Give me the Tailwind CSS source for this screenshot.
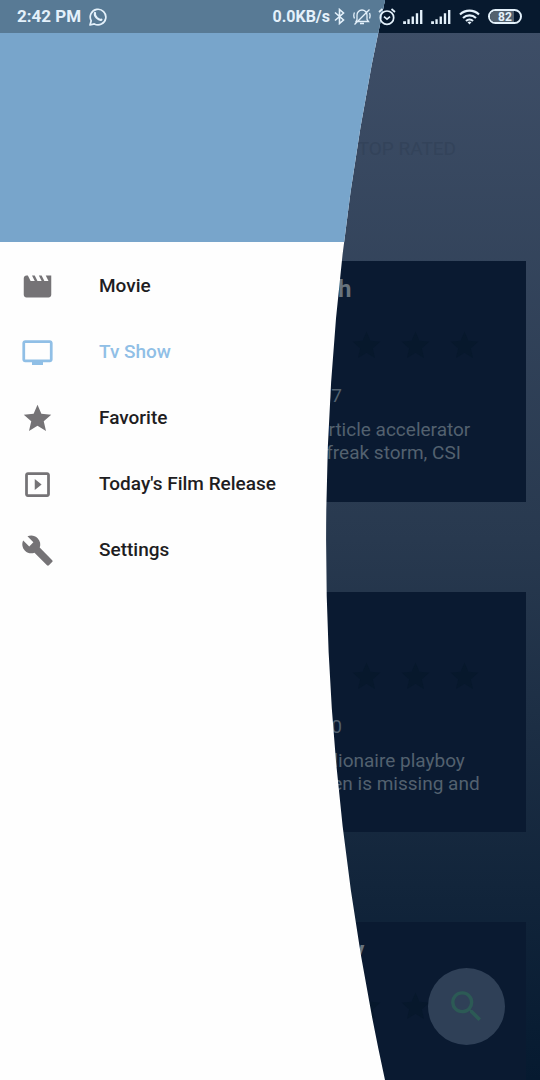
<!DOCTYPE html>
<html lang="en">
<head>
<meta charset="utf-8">
<meta name="viewport" content="width=device-width, initial-scale=1">
<title>TV Shows</title>
<script src="https://cdn.jsdelivr.net/npm/@tailwindcss/browser@4"></script>
</head>
<body class="font-[Roboto,sans-serif]">
<svg class="absolute size-0" aria-hidden="true">
  <defs>
    <clipPath id="drawer-curve" clipPathUnits="objectBoundingBox"><path d="M0 0H1Q.694 .5 1 1H0Z"/></clipPath>
    <symbol id="star" viewBox="0 0 24 24"><path d="M12 17.27 18.18 21l-1.64-7.03L22 9.24l-7.19-.61L12 2 9.19 8.63 2 9.24l5.46 4.73L5.82 21z"/></symbol>
    <symbol id="signal" viewBox="0 0 21 16"><path d="M0 13h3v3H0zM4.500 11h2.500v5H4.500zM9 8h2.500v8H9zM13.500 4.500H16V16h-2.500zM18 1h2.500v15H18z"/></symbol>
  </defs>
</svg>

<div class="relative min-h-screen overflow-hidden bg-linear-to-b from-[#3f4f68] via-[#28394f] to-[#061a30]">

  <main class="h-screen overflow-hidden">
    <div class="h-[33px] bg-[#07192e]"></div>
    <nav class="flex h-[228px] items-start justify-end pt-[104px] pr-[84px]">
      <a href="#" class="text-[19px] leading-6 text-[#33435a]">TOP RATED</a>
    </nav>
    <div class="flex flex-col gap-[90px] pr-3.5">
      <article class="h-[241px] shrink-0 bg-[#0a1a31] pt-3 pl-[246px]">
        <h2 class="text-2xl leading-8 font-bold text-[#68737d]">The Flash</h2>
        <div class="mt-6 flex gap-4 pl-1.5 text-[#07182c]">
          <svg class="size-[33px]" fill="currentColor"><use href="#star"/></svg>
          <svg class="size-[33px]" fill="currentColor"><use href="#star"/></svg>
          <svg class="size-[33px]" fill="currentColor"><use href="#star"/></svg>
          <svg class="size-[33px]" fill="currentColor"><use href="#star"/></svg>
          <svg class="size-[33px]" fill="currentColor"><use href="#star"/></svg>
        </div>
        <p class="mt-[22px] text-[19px] leading-6 text-[#53616f]">2014-10-07</p>
        <p class="mt-2.5 text-[19px] leading-[23px] whitespace-nowrap text-[#53616f]">After a particle accelerator<br>causes a freak storm, CSI</p>
      </article>
      <article class="h-[240px] shrink-0 bg-[#0a1a31] pt-3 pl-[246px]">
        <h2 class="text-2xl leading-8 font-bold text-[#68737d]">Arrow</h2>
        <div class="mt-6 flex gap-4 pl-1.5 text-[#07182c]">
          <svg class="size-[33px]" fill="currentColor"><use href="#star"/></svg>
          <svg class="size-[33px]" fill="currentColor"><use href="#star"/></svg>
          <svg class="size-[33px]" fill="currentColor"><use href="#star"/></svg>
          <svg class="size-[33px]" fill="currentColor"><use href="#star"/></svg>
          <svg class="size-[33px]" fill="currentColor"><use href="#star"/></svg>
        </div>
        <p class="mt-[22px] text-[19px] leading-6 text-[#53616f]">2012-10-10</p>
        <p class="mt-2.5 text-[19px] leading-[23px] whitespace-nowrap text-[#53616f]">Spoiled billionaire playboy<br>Oliver Queen is missing and</p>
      </article>
      <article class="h-[240px] shrink-0 bg-[#0a1a31] pt-3 pl-[246px]">
        <h2 class="text-2xl leading-8 font-bold text-[#68737d]">The Family</h2>
        <div class="mt-6 flex gap-4 pl-1.5 text-[#07182c]">
          <svg class="size-[33px]" fill="currentColor"><use href="#star"/></svg>
          <svg class="size-[33px]" fill="currentColor"><use href="#star"/></svg>
          <svg class="size-[33px]" fill="currentColor"><use href="#star"/></svg>
          <svg class="size-[33px]" fill="currentColor"><use href="#star"/></svg>
        </div>
      </article>
    </div>
  </main>

  <button aria-label="Search" class="absolute right-[35px] bottom-[35px] flex size-[77px] items-center justify-center rounded-full bg-[#2f4057] text-[#2c5a55]">
    <svg class="size-[41px]" viewBox="0 0 24 24" fill="currentColor"><path d="M15.5 14h-.79l-.28-.27A6.471 6.471 0 0 0 16 9.500 6.500 6.500 0 1 0 9.500 16c1.610 0 3.090-.59 4.230-1.570l.27.28v.79l5 4.990L20.490 19l-4.990-5zm-6 0C7.010 14 5 11.990 5 9.500S7.010 5 9.500 5 14 7.010 14 9.500 11.990 14 9.500 14z"/></svg>
  </button>

  <!-- Navigation drawer with a curved trailing edge -->
  <aside class="absolute inset-y-0 left-0 w-[385px] bg-[#fefefe] [clip-path:url(#drawer-curve)]">
    <div class="h-[242px] bg-[#78a5cb]"><div class="h-[33px] bg-[#587a95]"></div></div>
    <nav class="flex flex-col pt-[11px] text-[19px] font-medium text-[#1e1d22]">
      <a href="#" class="flex h-[66px] items-center gap-[45px] pl-[21px]">
        <svg class="size-[33px] text-[#757376]" viewBox="0 0 24 24" fill="currentColor"><path d="m18 4 2 4h-3l-2-4h-2l2 4h-3l-2-4H8l2 4H7L5 4H4c-1.100 0-1.990.9-1.990 2L2 18c0 1.100.9 2 2 2h16c1.100 0 2-.9 2-2V4z"/></svg>
        Movie</a>
      <a href="#" aria-current="page" class="flex h-[66px] items-center gap-[45px] pl-[21px] text-[#90bfe6]">
        <svg class="size-[33px]" viewBox="0 0 24 24" fill="currentColor"><path d="M21 3H3c-1.110 0-2 .89-2 2v12c0 1.100.89 2 2 2h5v2h8v-2h5c1.100 0 1.990-.9 1.990-2L23 5c0-1.110-.9-2-2-2zm0 14H3V5h18z"/></svg>
        Tv Show</a>
      <a href="#" class="flex h-[66px] items-center gap-[45px] pl-[21px]">
        <svg class="size-[33px] text-[#757376]" fill="currentColor"><use href="#star"/></svg>
        Favorite</a>
      <a href="#" class="flex h-[66px] items-center gap-[45px] pl-[21px]">
        <svg class="size-[33px] text-[#757376]" viewBox="0 0 24 24" fill="currentColor"><path d="M10 8v8l5-4zm9-5H5c-1.100 0-2 .9-2 2v14c0 1.100.9 2 2 2h14c1.100 0 2-.9 2-2V5c0-1.100-.9-2-2-2zm0 16H5V5h14z"/></svg>
        Today's Film Release</a>
      <a href="#" class="flex h-[66px] items-center gap-[45px] pl-[21px]">
        <svg class="size-[33px] text-[#757376]" viewBox="0 0 24 24" fill="currentColor"><path d="m22.700 19-9.100-9.100c.9-2.300.4-5-1.500-6.900-2-2-5-2.400-7.400-1.300L9 6 6 9 1.600 4.700C.4 7.100.9 10.100 2.900 12.100c1.900 1.900 4.600 2.400 6.900 1.500l9.100 9.100c.4.4 1 .4 1.400 0l2.300-2.300c.5-.4.5-1.100.1-1.400z"/></svg>
        Settings</a>
    </nav>
  </aside>

  <header class="absolute inset-x-0 top-0 flex h-[33px] items-center justify-between pr-[18px] pl-[17px] text-[#e4f1fb]">
    <div class="flex items-center gap-2">
      <span class="text-[17px] font-bold">2:42 PM</span>
      <svg class="size-[18px]" viewBox="0 0 18 18" fill="none" stroke="currentColor" stroke-width="1.700"><path d="M1 17l1.200-4.200A7.800 7.800 0 1 1 5.300 15.900z" stroke-linejoin="round"/><path d="M6 5c-.5 1.500.3 3.300 1.700 4.800 1.500 1.500 3.300 2.400 4.700 1.900" stroke-width="2.200" stroke-linecap="round"/></svg>
    </div>
    <div class="flex items-center">
      <span class="mr-1 text-base font-bold">0.0KB/s</span>
      <svg class="mr-2 h-[17px] w-[11px]" viewBox="0 0 11 17" fill="none" stroke="currentColor" stroke-width="1.600"><path d="M1 4.500l8.500 7.500-4 3.500v-14l4 3.500L1 12.500"/></svg>
      <svg class="mr-[7px] size-[18px]" viewBox="0 0 18 18" fill="none" stroke="currentColor" stroke-width="1.300"><path d="M1.500 16.500l15-15M3 13.500h12.500l-1.500-2V7a5 5 0 0 0-10 0v4.500zM7 15.500h4M1.500 4.500a7 7 0 0 0 0 6M16.500 5a7 7 0 0 1 0 5.500"/></svg>
      <svg class="mr-[7px] size-[18px]" viewBox="0 0 18 18" fill="none" stroke="currentColor" stroke-width="1.700"><circle cx="9" cy="9.700" r="6.700"/><path d="M6 8.700l3 2.500 3-2.500M1 4l3.500-3M17 4l-3.500-3"/></svg>
      <svg class="mr-2 h-[15px] w-5" fill="currentColor"><use href="#signal"/></svg>
      <svg class="mr-2 h-[15px] w-5" fill="currentColor"><use href="#signal"/></svg>
      <svg class="mr-2 h-4 w-[21px]" viewBox="0 0 21 16" fill="none" stroke="currentColor" stroke-width="2.100"><path d="M1 5.500a13.500 13.500 0 0 1 19 0M4 9a9.300 9.300 0 0 1 13 0M7 12a5 5 0 0 1 7 0"/><path d="M10.500 15.500l-2-2.200a3 3 0 0 1 4 0z" fill="currentColor" stroke="none"/></svg>
      <span class="flex h-[15px] w-[34px] items-center justify-center rounded-full border-2 border-current"><span class="flex h-full w-full items-center justify-center rounded-full bg-linear-to-r from-[#53616f] from-80% to-transparent to-80% text-xs leading-none font-bold">82</span></span>
    </div>
  </header>
</div>
</body>
</html>
